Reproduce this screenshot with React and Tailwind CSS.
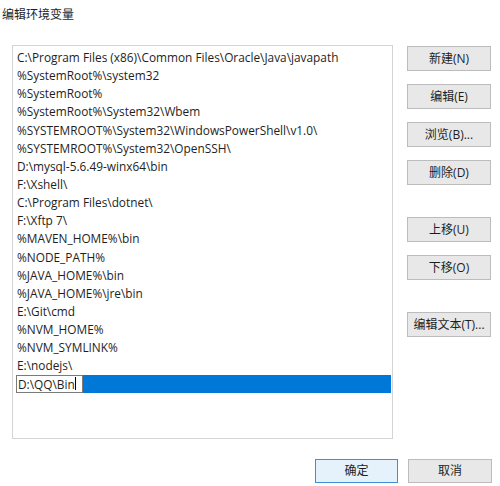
import React from "react";

const paths = [
  "C:\\Program Files (x86)\\Common Files\\Oracle\\Java\\javapath",
  "%SystemRoot%\\system32",
  "%SystemRoot%",
  "%SystemRoot%\\System32\\Wbem",
  "%SYSTEMROOT%\\System32\\WindowsPowerShell\\v1.0\\",
  "%SYSTEMROOT%\\System32\\OpenSSH\\",
  "D:\\mysql-5.6.49-winx64\\bin",
  "F:\\Xshell\\",
  "C:\\Program Files\\dotnet\\",
  "F:\\Xftp 7\\",
  "%MAVEN_HOME%\\bin",
  "%NODE_PATH%",
  "%JAVA_HOME%\\bin",
  "%JAVA_HOME%\\jre\\bin",
  "E:\\Git\\cmd",
  "%NVM_HOME%",
  "%NVM_SYMLINK%",
  "E:\\nodejs\\",
];

const SideButton = ({ children, className = "" }) => (
  <button
    className={
      "w-[84px] h-[25px] bg-[#e8e8e8] border border-[#bcbcbc] text-[12px] text-[#1e1e1e] flex items-center justify-center " +
      className
    }
  >
    {children}
  </button>
);

export default function App() {
  return (
    <div
      className="w-[500px] h-[486px] bg-white flex flex-col text-[#1e1e1e]"
      style={{ fontFamily: '"Open Sans", "Noto Sans CJK SC", sans-serif' }}
    >
      <div className="h-[45px] pl-[2px] pt-[7px] text-[12px] leading-[16px]">
        编辑环境变量
      </div>

      <div className="flex pl-[12px]">
        {/* path list */}
        <div className="w-[381px] h-[394px] border border-[#d4d4d4] pt-[2px] pl-[3px] pr-[1px] text-[11.85px]">
          {paths.map((p) => (
            <div key={p} className="h-[18.15px] leading-[18px] pl-[1px] whitespace-nowrap">
              {p}
            </div>
          ))}
          <div className="h-[18px] flex bg-[#0078d7]">
            <div className="w-[67px] h-[18px] bg-white border border-[#7a7a7a] flex items-center pl-[1px] leading-[16px]">
              <span>D:\QQ\Bin</span>
              <span className="w-[1px] h-[13px] bg-black" />
            </div>
          </div>
        </div>

        {/* actions */}
        <div className="flex flex-col gap-[13px] ml-[14px] pt-[1px]">
          <SideButton>新建(N)</SideButton>
          <SideButton>编辑(E)</SideButton>
          <SideButton>浏览(B)...</SideButton>
          <SideButton>删除(D)</SideButton>
          <SideButton className="mt-[19px]">上移(U)</SideButton>
          <SideButton>下移(O)</SideButton>
          <SideButton className="mt-[19px]">编辑文本(T)...</SideButton>
        </div>
      </div>

      <div className="flex justify-end gap-[10px] pr-[8px] mt-[20px]">
        <button className="w-[83px] h-[24px] bg-[#e5f1fb] border border-[#3f8fd8] text-[12px] flex items-center justify-center">
          确定
        </button>
        <button className="w-[84px] h-[24px] bg-[#e8e8e8] border border-[#bcbcbc] text-[12px] flex items-center justify-center">
          取消
        </button>
      </div>
    </div>
  );
}
